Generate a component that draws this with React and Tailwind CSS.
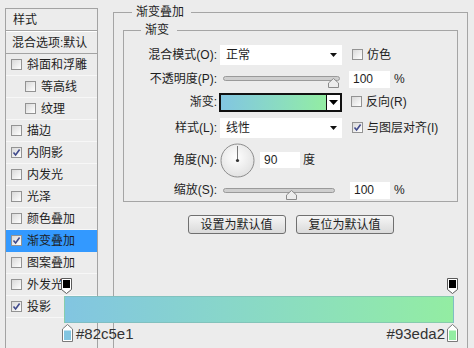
import React from "react";

const items = [
  { label: "斜面和浮雕" },
  { label: "等高线", indent: true },
  { label: "纹理", indent: true },
  { label: "描边" },
  { label: "内阴影", checked: true },
  { label: "内发光" },
  { label: "光泽" },
  { label: "颜色叠加" },
  { label: "渐变叠加", checked: true, active: true },
  { label: "图案叠加" },
  { label: "外发光" },
  { label: "投影", checked: true },
];

function Check({ checked }) {
  return (
    <span className="inline-flex w-[11px] h-[11px] shrink-0 items-center justify-center border border-[#939393] bg-linear-to-br from-[#d9d9d9] to-white">
      {checked && (
        <svg width="9" height="9" viewBox="0 0 9 9">
          <path d="M1.5 4.5 L3.6 7 L7.6 1.5" fill="none" stroke="#404a8c" strokeWidth="1.6" />
        </svg>
      )}
    </span>
  );
}

function Arrow() {
  return (
    <svg width="7" height="4" viewBox="0 0 7 4">
      <path d="M0 0 H7 L3.5 4 Z" fill="#111" />
    </svg>
  );
}

function Thumb() {
  return (
    <svg width="11" height="10" viewBox="0 0 11 10">
      <path d="M5.5 0.5 L10.5 5 V9.5 H0.5 V5 Z" fill="#ececec" stroke="#8a8a8a" />
    </svg>
  );
}

function Slider({ width, thumb }) {
  return (
    <div className="relative h-full" style={{ width }}>
      <div className="absolute left-0 right-0 top-[8px] h-[5px] rounded-full border border-[#9a9a9a] bg-[#cfcfcf]" />
      <div className="absolute top-[10px]" style={{ left: thumb }}>
        <Thumb />
      </div>
    </div>
  );
}

function TopStop() {
  return (
    <svg width="11" height="16" viewBox="0 0 11 16">
      <path d="M0.5 0.5 H10.5 V11.5 L5.5 15.5 L0.5 11.5 Z" fill="#fff" stroke="#5a5a5a" />
      <rect x="2" y="2" width="7" height="8" fill="#000" />
    </svg>
  );
}

function BottomStop({ color }) {
  return (
    <svg width="11" height="18" viewBox="0 0 11 18">
      <path d="M5.5 0.5 L10.5 5 V17.5 H0.5 V5 Z" fill="#fff" stroke="#7a7a7a" />
      <rect x="2" y="6.5" width="7" height="9.5" fill={color} />
    </svg>
  );
}

export default function App() {
  return (
    <div className="relative w-[474px] h-[348px] overflow-hidden bg-[#ececec] flex items-start text-[12px] text-[#1e1e1e] leading-none [font-family:'Liberation_Sans','Noto_Sans_CJK_SC',sans-serif]">
      {/* style list */}
      <div className="ml-[5px] mt-[8px] w-[93px] h-[340px] shrink-0 border-x border-t border-[#a3a3a3] flex flex-col">
        <div className="h-[22px] border-b border-[#a3a3a3] flex items-center pl-[7px]">样式</div>
        <div className="h-[1px] bg-white" />
        <div className="h-[22px] border-b border-[#a3a3a3] flex items-center pl-[6px] whitespace-nowrap">混合选项:默认</div>
        {items.map((it) => (
          <div
            key={it.label}
            className={
              "h-[22px] shrink-0 border-b flex items-center whitespace-nowrap " +
              (it.indent ? "pl-[19px] " : "pl-[5px] ") +
              (it.active ? "bg-[#3399ff] border-[#3399ff]" : "border-[#f7f7f7]")
            }
          >
            <Check checked={it.checked} />
            <span className="ml-[5px]">{it.label}</span>
          </div>
        ))}
      </div>

      {/* settings */}
      <fieldset className="ml-[15px] mt-[5px] w-[351px] h-[360px] shrink-0 border border-[#a5a5a5] px-[9px]">
        <legend className="ml-[9px] pl-[4px] pr-[7px] leading-[14px]">渐变叠加</legend>
        <fieldset className="mt-[4px] w-[335px] border border-[#a5a5a5] pt-[7px] pb-[1px]">
          <legend className="ml-[17px] pl-[4px] pr-[8px] leading-[14px]">渐变</legend>

          <div className="h-[22px] flex items-center">
            <div className="w-[93px] text-right">混合模式(O):</div>
            <div className="ml-[3px] w-[122px] h-[20px] bg-white flex items-center justify-between pl-[6px] pr-[5px]">
              <span>正常</span>
              <Arrow />
            </div>
            <div className="ml-[10px]"><Check /></div>
            <span className="ml-[4px]">仿色</span>
          </div>

          <div className="mt-[2px] h-[22px] flex items-center">
            <div className="w-[93px] text-right">不透明度(P):</div>
            <div className="ml-[6px] h-full">
              <Slider width="117px" thumb="105px" />
            </div>
            <div className="ml-[9px] w-[41px] h-[17px] bg-white flex items-center pl-[4px]">100</div>
            <span className="ml-[4px]">%</span>
          </div>

          <div className="mt-[2px] h-[20px] flex items-center">
            <div className="w-[93px] text-right">渐变:</div>
            <div className="ml-[2px] w-[123px] h-[19px] border-2 border-[#111] flex">
              <div className="flex-1 bg-linear-to-r from-[#82c5e1] to-[#93eda2]" />
              <div className="w-[14px] border-l border-[#111] bg-white flex items-center justify-center">
                <svg width="9" height="5" viewBox="0 0 9 5">
                  <path d="M0 0 H9 L4.5 5 Z" fill="#000" />
                </svg>
              </div>
            </div>
            <div className="ml-[9px]"><Check /></div>
            <span className="ml-[4px]">反向(R)</span>
          </div>

          <div className="mt-[5px] h-[22px] flex items-center">
            <div className="w-[93px] text-right">样式(L):</div>
            <div className="ml-[3px] w-[122px] h-[20px] bg-white flex items-center justify-between pl-[6px] pr-[5px]">
              <span>线性</span>
              <Arrow />
            </div>
            <div className="ml-[10px]"><Check checked /></div>
            <span className="ml-[4px]">与图层对齐(I)</span>
          </div>

          <div className="mt-[2px] h-[38px] flex items-center">
            <div className="w-[93px] text-right">角度(N):</div>
            <svg className="ml-[3px]" width="35" height="35" viewBox="0 0 35 35">
              <defs>
                <radialGradient id="dial" cx="0.45" cy="0.4" r="0.6">
                  <stop offset="0" stopColor="#ffffff" />
                  <stop offset="1" stopColor="#e2e2e2" />
                </radialGradient>
              </defs>
              <circle cx="17.5" cy="17.5" r="16.5" fill="url(#dial)" stroke="#8c8c8c" />
              <line x1="17.5" y1="17.5" x2="17.5" y2="3" stroke="#777" />
              <circle cx="17.5" cy="17.5" r="1.6" fill="#333" />
            </svg>
            <div className="ml-[5px] w-[40px] h-[16px] bg-white flex items-center pl-[4px]">90</div>
            <span className="ml-[3px]">度</span>
          </div>

          <div className="mt-[1px] h-[20px] flex items-center">
            <div className="w-[93px] text-right">缩放(S):</div>
            <div className="ml-[6px] h-full">
              <Slider width="112px" thumb="63px" />
            </div>
            <div className="ml-[15px] w-[40px] h-[17px] bg-white flex items-center pl-[4px]">100</div>
            <span className="ml-[4px]">%</span>
          </div>
        </fieldset>

        <div className="mt-[13px] flex justify-center gap-[10px]">
          <button className="w-[98px] h-[19px] border border-[#707070] rounded-[3px] bg-linear-to-b from-[#f6f6f6] to-[#dadada] text-[12px] leading-none">
            设置为默认值
          </button>
          <button className="w-[98px] h-[19px] border border-[#707070] rounded-[3px] bg-linear-to-b from-[#f6f6f6] to-[#dadada] text-[12px] leading-none">
            复位为默认值
          </button>
        </div>
      </fieldset>

      {/* gradient editor strip overlay */}
      <div className="absolute left-[61px] top-[278px] w-[397px] flex flex-col">
        <div className="h-[16px] flex justify-between">
          <TopStop />
          <TopStop />
        </div>
        <div className="mt-[2px] ml-[3px] mr-[4px] h-[27px] border border-[#7fb8b0]/60 bg-linear-to-r from-[#82c5e1] to-[#93eda2]" />
        <div className="mt-[1px] h-[18px] flex items-end">
          <div className="ml-[1px]"><BottomStop color="#82c5e1" /></div>
          <span className="ml-[3px] mb-[1px] text-[15px] text-[#333]">#82c5e1</span>
          <span className="ml-auto mb-[1px] mr-[2px] text-[15px] text-[#333]">#93eda2</span>
          <BottomStop color="#93eda2" />
        </div>
      </div>
    </div>
  );
}
